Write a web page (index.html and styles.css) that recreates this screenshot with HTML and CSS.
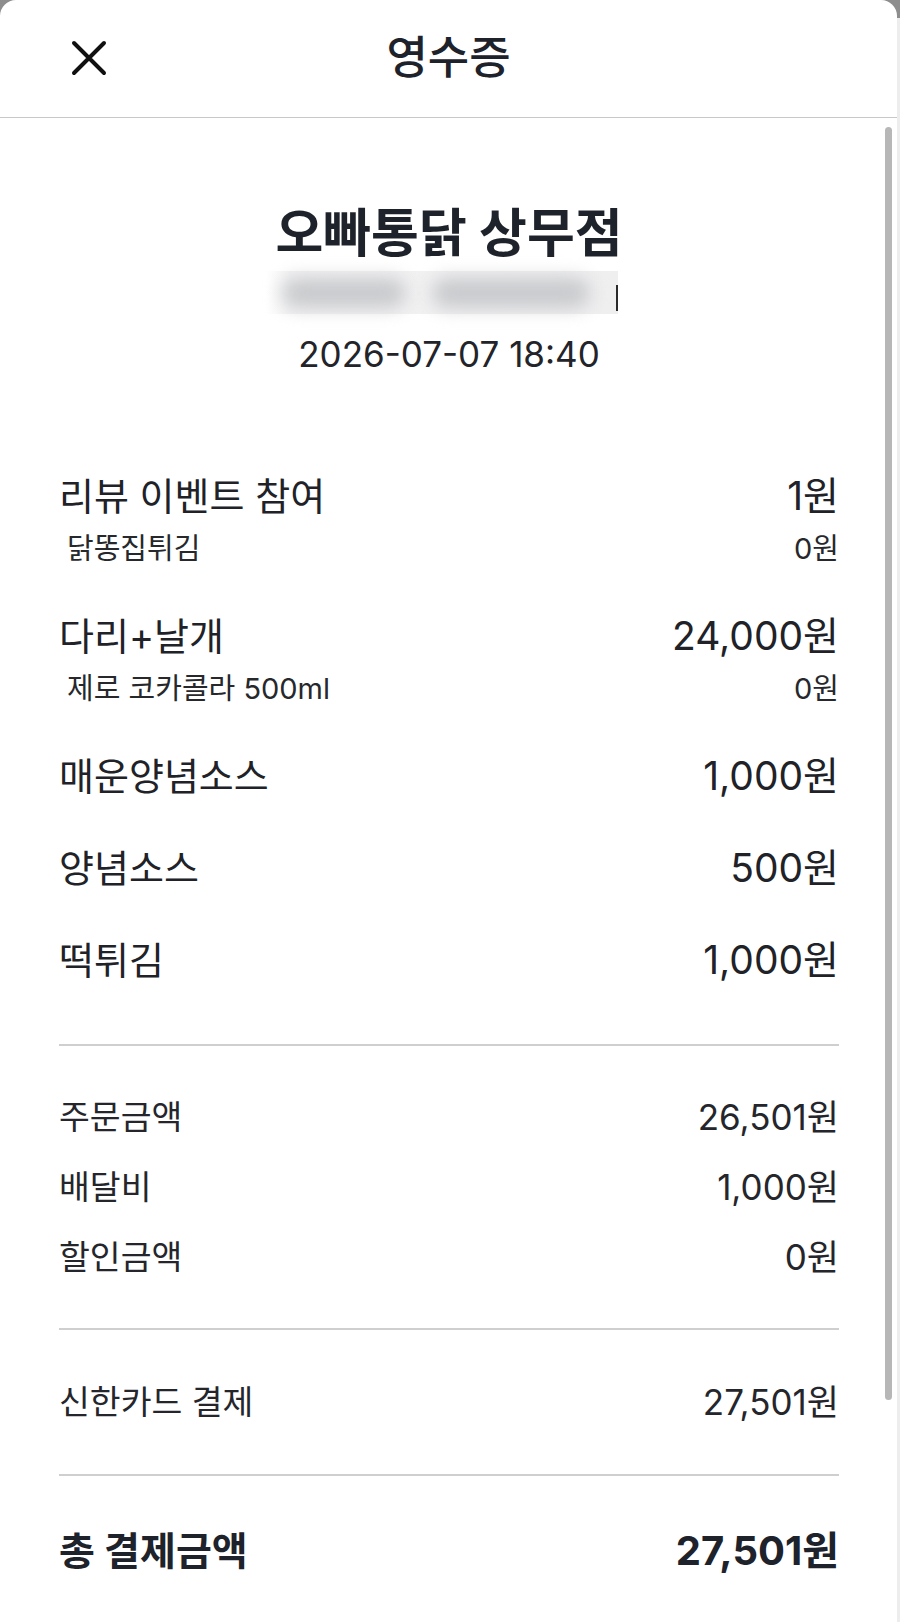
FILE: index.html
```html
<!DOCTYPE html>
<html lang="ko">
<head>
<meta charset="utf-8">
<title>영수증</title>
<link rel="stylesheet" href="styles.css">
</head>
<body>
<div class="sheet">
  <header class="topbar">
    <button class="close" aria-label="닫기">
      <svg width="36" height="36" viewBox="0 0 36 36"><path d="M3 3 L33 33 M33 3 L3 33" stroke="#111" stroke-width="4" stroke-linecap="round" fill="none"/></svg>
    </button>
    <h1 class="title">영수증</h1>
    <span class="spacer"></span>
  </header>

  <main class="content">
    <section class="store">
      <h2 class="store-name">오빠통닭 상무점</h2>
      <div class="redacted"><span class="blob blob-a"></span><span class="blob blob-b"></span><span class="caret"></span></div>
      <p class="date">2026-07-07 18:40</p>
    </section>

    <ul class="items">
      <li class="item">
        <div class="row main"><span>리뷰 이벤트 참여</span><span>1원</span></div>
        <div class="row sub"><span>닭똥집튀김</span><span>0원</span></div>
      </li>
      <li class="item">
        <div class="row main"><span>다리+날개</span><span>24,000원</span></div>
        <div class="row sub"><span>제로 코카콜라 500ml</span><span>0원</span></div>
      </li>
      <li class="item">
        <div class="row main"><span>매운양념소스</span><span>1,000원</span></div>
      </li>
      <li class="item">
        <div class="row main"><span>양념소스</span><span>500원</span></div>
      </li>
      <li class="item">
        <div class="row main"><span>떡튀김</span><span>1,000원</span></div>
      </li>
    </ul>

    <section class="block summary">
      <div class="row line"><span>주문금액</span><span>26,501원</span></div>
      <div class="row line"><span>배달비</span><span>1,000원</span></div>
      <div class="row line"><span>할인금액</span><span>0원</span></div>
    </section>

    <section class="block payment">
      <div class="row line"><span>신한카드 결제</span><span>27,501원</span></div>
    </section>

    <section class="block total">
      <div class="row grand"><span>총 결제금액</span><span>27,501원</span></div>
    </section>
  </main>

  <div class="scrollbar"></div>
</div>
</body>
</html>
```

FILE: styles.css
```css
* { box-sizing: border-box; }

html, body {
  margin: 0;
  padding: 0;
}

body {
  width: 900px;
  min-height: 1622px;
  background: linear-gradient(to bottom, #8d8d8d 0, #8d8d8d 18px, #ededed 18px);
  font-family: Inter, "Noto Sans CJK KR", sans-serif;
  color: #1f2329;
}

.sheet {
  position: relative;
  width: 897px;
  min-height: 1622px;
  background: #ffffff;
  border-radius: 16px 16px 0 0;
  overflow: hidden;
}

.topbar {
  height: 118px;
  display: grid;
  grid-template-columns: 1fr auto 1fr;
  align-items: center;
  border-bottom: 1px solid #c8c8c8;
  padding: 0 71px 2px 71px;
}

.close {
  justify-self: start;
  width: 36px;
  height: 36px;
  padding: 0;
  border: 0;
  background: none;
  display: flex;
}

.title {
  margin: 0;
  font-size: 45px;
  font-weight: 500;
  line-height: 1;
  color: #1d222b;
}

.content {
  padding: 86px 58px 0 59px;
}

.store {
  display: flex;
  flex-direction: column;
  align-items: center;
}

.store-name {
  margin: 0;
  font-size: 52px;
  line-height: 60px;
  font-weight: 700;
  color: #1d222b;
}

.redacted {
  margin: 7px 14px 0 0;
  width: 352px;
  height: 43px;
  display: flex;
  align-items: center;
  gap: 26px;
  padding-left: 16px;
  background: linear-gradient(to right, #ffffff 0, #f3f3f4 24px, #efeff0 100%);
}

.blob {
  height: 30px;
  border-radius: 15px;
  background: #c9cacd;
  filter: blur(9px);
}

.blob-a { width: 132px; }
.blob-b { width: 168px; }

.caret {
  margin-left: auto;
  width: 2px;
  height: 26px;
  margin-top: 10px;
  background: #2a2a2a;
}

.date {
  margin: 18px 0 0;
  font-size: 35px;
  line-height: 44px;
  color: #222429;
}

.items {
  list-style: none;
  margin: 96px 0 0;
  padding: 0;
  display: flex;
  flex-direction: column;
  gap: 44px;
}

.row {
  display: flex;
  justify-content: space-between;
  align-items: center;
}

.main {
  font-size: 38px;
  line-height: 48px;
  color: #202227;
}

.main span:last-child {
  font-size: 39px;
}

.sub {
  margin-top: 10px;
  font-size: 29px;
  line-height: 38px;
  padding-left: 8px;
  color: #26282c;
}

.block {
  border-top: 2px solid #cfcfcf;
}

.summary {
  margin-top: 60px;
  padding: 49px 0 49px;
  display: flex;
  flex-direction: column;
  gap: 26px;
}

.payment {
  padding: 50px 0 50px;
}

.line {
  font-size: 33.5px;
  line-height: 44px;
  color: #24262b;
}

.line span:last-child {
  font-size: 35px;
}

.total {
  padding: 50px 0 40px;
}

.grand {
  font-size: 39px;
  line-height: 50px;
  font-weight: 700;
  color: #1d222b;
}

.grand span:last-child {
  font-size: 40px;
}

.scrollbar {
  position: absolute;
  top: 127px;
  right: 5px;
  width: 7px;
  height: 1273px;
  border-radius: 4px;
  background: #b7b7b7;
}
```
